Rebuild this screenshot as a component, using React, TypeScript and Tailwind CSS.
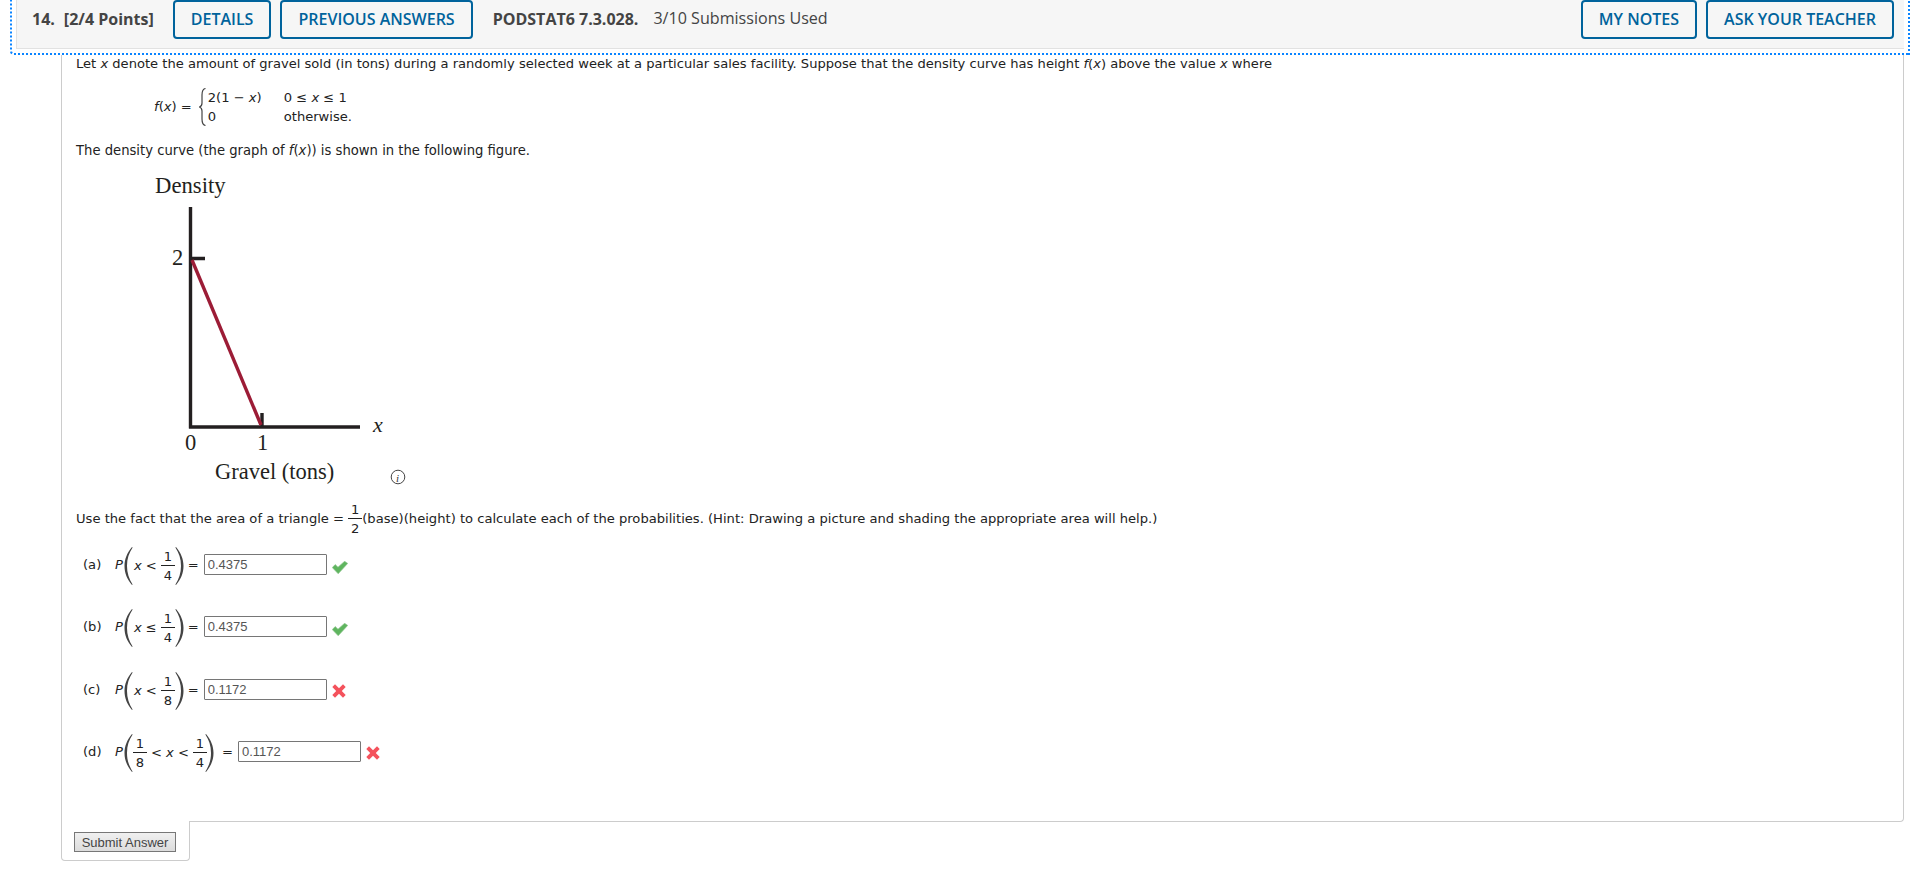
const noteBtn =
  'h-[39px] px-[16px] pb-[2px] border-2 border-[#00639c] rounded-[4px] text-[16px] font-semibold text-[#00639c] bg-[#f6f6f6] whitespace-nowrap'

function Frac({ top, bottom }: { top: string; bottom: string }) {
  return (
    <span className="inline-flex flex-col items-center w-[14px] leading-[15px]">
      <span className="h-[17px] w-full text-center border-b border-[#222]">{top}</span>
      <span className="h-[17px] pt-[2px]">{bottom}</span>
    </span>
  )
}

function Paren({ right }: { right?: boolean }) {
  return (
    <svg width="9" height="38" viewBox="0 0 9 38" className={right ? 'shrink-0 -scale-x-100' : 'shrink-0'}>
      <path d="M8 0 C3 6 .5 12 .5 19 C.5 26 3 32 8 38 L8.6 37.4 C5 32 3 26 3 19 C3 12 5 6 8.6 .6 Z" fill="#444" />
    </svg>
  )
}

function Check() {
  return (
    <svg width="16" height="13" viewBox="0 0 16 13" className="shrink-0">
      <path d="M.3 6.6 L3.2 3.6 L6 6.2 L12.6 .3 L15.7 2.4 L6.2 12.7 Z" fill="#5fb55f" stroke="#8cc48c" strokeWidth=".7" />
    </svg>
  )
}

function Cross() {
  return (
    <svg width="14" height="14" viewBox="0 0 14 14" className="shrink-0">
      <path d="M3 .3 L7 4.2 L11 .3 L13.7 3 L9.8 7 L13.7 11 L11 13.7 L7 9.8 L3 13.7 L.3 11 L4.2 7 L.3 3 Z" fill="#f4525c" />
    </svg>
  )
}

function Answer({ value, ok }: { value: string; ok?: boolean }) {
  return (
    <>
      <span className="ml-[4px] mr-[5px] -mt-[3px]">=</span>
      <input
        readOnly
        value={value}
        className="w-[123px] h-[21px] -mt-[4px] px-[3px] border border-[#767676] rounded-[1px] bg-white text-[13px] text-[#555] outline-none font-['Liberation_Sans',Arial,sans-serif]"
      />
      <span className={ok ? 'ml-[5px] mt-[2px]' : 'ml-[5px] -mt-[1px]'}>{ok ? <Check /> : <Cross />}</span>
    </>
  )
}

function Figure() {
  return (
    <svg width="360" height="325" viewBox="76 165 360 325" className="block">
      <g fill="#231f20" fontFamily="'Liberation Serif', serif">
        <text x="155" y="193" fontSize="22.7">Density</text>
        <text x="172" y="265" fontSize="22.5">2</text>
        <text x="185" y="450" fontSize="22.5">0</text>
        <text x="257" y="450" fontSize="22.5">1</text>
        <text x="373" y="431.5" fontSize="22" fontStyle="italic">x</text>
        <text x="215" y="479" fontSize="22.5">Gravel (tons)</text>
      </g>
      <path d="M190.5 207 V428.5 M189 427 H360 M190.5 258.5 H205 M262 413 V427" stroke="#231f20" strokeWidth="3.4" fill="none" />
      <path d="M192 260 L261 425" stroke="#9c1c36" strokeWidth="3.4" fill="none" />
      <circle cx="398" cy="477" r="6.8" fill="none" stroke="#444" strokeWidth="1" />
      <text x="396" y="481.5" fontSize="11" fontStyle="italic" fontFamily="'Liberation Serif', serif" fill="#333">i</text>
    </svg>
  )
}

export default function App() {
  return (
    <div className="w-[1920px] h-[869px] overflow-hidden bg-white font-['DejaVu_Sans',Verdana,sans-serif] text-[13.1px] text-[#222]">
      {/* Шапка вопроса */}
      <div className="-mt-3 mx-[10px] border-2 border-dotted border-[#0a84ff] rounded-bl-[4px] px-[4px] pb-[4px] font-['Open_Sans',sans-serif]">
        <div className="flex items-center justify-between pt-[10px] pb-[9px] pl-[15px] pr-[10px] bg-[#f6f6f6] border-l border-b border-[#e2e2e2] text-[16px] text-[#444]">
          <div className="flex items-center">
            <span className="font-bold mr-[9px] pb-[2px]">14.</span>
            <span className="font-bold mr-[19px] pb-[2px]">[2/4 Points]</span>
            <button className={noteBtn + ' mr-[9px]'}>DETAILS</button>
            <button className={noteBtn + ' mr-[20px]'}>PREVIOUS ANSWERS</button>
            <span className="font-bold mr-[15px] pb-[2px]">PODSTAT6 7.3.028.</span>
            <span className="pb-[2px] text-[16.1px]">3/10 Submissions Used</span>
          </div>
          <div className="flex items-center gap-[9px]">
            <button className={noteBtn}>MY NOTES</button>
            <button className={noteBtn}>ASK YOUR TEACHER</button>
          </div>
        </div>
      </div>

      {/* Текст задания */}
      <div className="ml-[61px] mr-[16px] pl-[14px] border-l border-r border-b border-[#ccc] rounded-br-[4px] h-[767px]">
        <p className="pt-px leading-[16px] text-[13.08px]">
          Let <i>x</i> denote the amount of gravel sold (in tons) during a randomly selected week at a particular sales facility. Suppose that the density curve has height <i>f</i>(<i>x</i>) above the value <i>x</i> where
        </p>

        <div className="flex items-center mt-[16px] ml-[78px] h-[38px]">
          <span className="mr-[7px]"><i>f</i>(<i>x</i>) =</span>
          <svg width="7" height="38" viewBox="0 0 7 38" className="shrink-0">
            <path d="M6.5 .5 C3.5 1 3 3 3 7 V15 C3 17 2 18.5 .5 19 C2 19.5 3 21 3 23 V31 C3 35 3.5 37 6.5 37.5" fill="none" stroke="#444" strokeWidth="1.2" />
          </svg>
          <div className="ml-[2px] grid grid-cols-[76px_auto] leading-[19px]">
            <span>2(1 − <i>x</i>)</span>
            <span>0 ≤ <i>x</i> ≤ 1</span>
            <span>0</span>
            <span>otherwise.</span>
          </div>
        </div>

        <p className="mt-[17px] leading-[16px] text-[13.18px]">
          The density curve (the graph of <i>f</i>(<i>x</i>)) is shown in the following figure.
        </p>

        <div className="mt-[6px]">
          <Figure />
        </div>

        <div className="flex items-center mt-[12px] h-[34px] text-[13.12px]">
          <span className="whitespace-pre">Use the fact that the area of a triangle = </span>
          <Frac top="1" bottom="2" />
          <span>(base)(height) to calculate each of the probabilities. (Hint: Drawing a picture and shading the appropriate area will help.)</span>
        </div>

        {/* Ответы */}
        <div className="mt-[11px] ml-[7px] flex flex-col gap-[24px]">
          <div className="flex items-center h-[38px]">
            <span className="w-[32px] -mt-[3px]">(a)</span>
            <i className="-mt-[3px] mr-[1px]">P</i>
            <Paren />
            <span className="ml-[1px] mr-[4px] -mt-[1px]"><i>x</i> &lt;</span>
            <Frac top="1" bottom="4" />
            <Paren right />
            <Answer value="0.4375" ok />
          </div>
          <div className="flex items-center h-[38px]">
            <span className="w-[32px] -mt-[3px]">(b)</span>
            <i className="-mt-[3px] mr-[1px]">P</i>
            <Paren />
            <span className="ml-[1px] mr-[4px] -mt-[1px]"><i>x</i> ≤</span>
            <Frac top="1" bottom="4" />
            <Paren right />
            <Answer value="0.4375" ok />
          </div>
          <div className="flex items-center h-[38px] mt-px">
            <span className="w-[32px] -mt-[3px]">(c)</span>
            <i className="-mt-[3px] mr-[1px]">P</i>
            <Paren />
            <span className="ml-[1px] mr-[4px] -mt-[1px]"><i>x</i> &lt;</span>
            <Frac top="1" bottom="8" />
            <Paren right />
            <Answer value="0.1172" />
          </div>
          <div className="flex items-center h-[38px]">
            <span className="w-[32px] -mt-[3px]">(d)</span>
            <i className="-mt-[3px] mr-[1px]">P</i>
            <Paren />
            <Frac top="1" bottom="8" />
            <span className="mx-[4px] -mt-[1px]">&lt; <i>x</i> &lt;</span>
            <Frac top="1" bottom="4" />
            <span className="-ml-[2px] mr-[4px] flex"><Paren right /></span>
            <Answer value="0.1172" />
          </div>
        </div>
      </div>

      {/* Кнопка отправки */}
      <div className="-mt-px ml-[61px] w-[129px] h-[40px] pt-[11px] pl-[12px] bg-white border-l border-r border-b border-[#ccc] rounded-b-[4px] relative">
        <button className="block w-[102px] h-[20px] border border-[#777] bg-linear-to-b from-[#f0f0f0] to-[#dcdcdc] text-[13px] leading-none text-[#444] font-['Liberation_Sans',Arial,sans-serif]">
          Submit Answer
        </button>
      </div>
    </div>
  )
}
